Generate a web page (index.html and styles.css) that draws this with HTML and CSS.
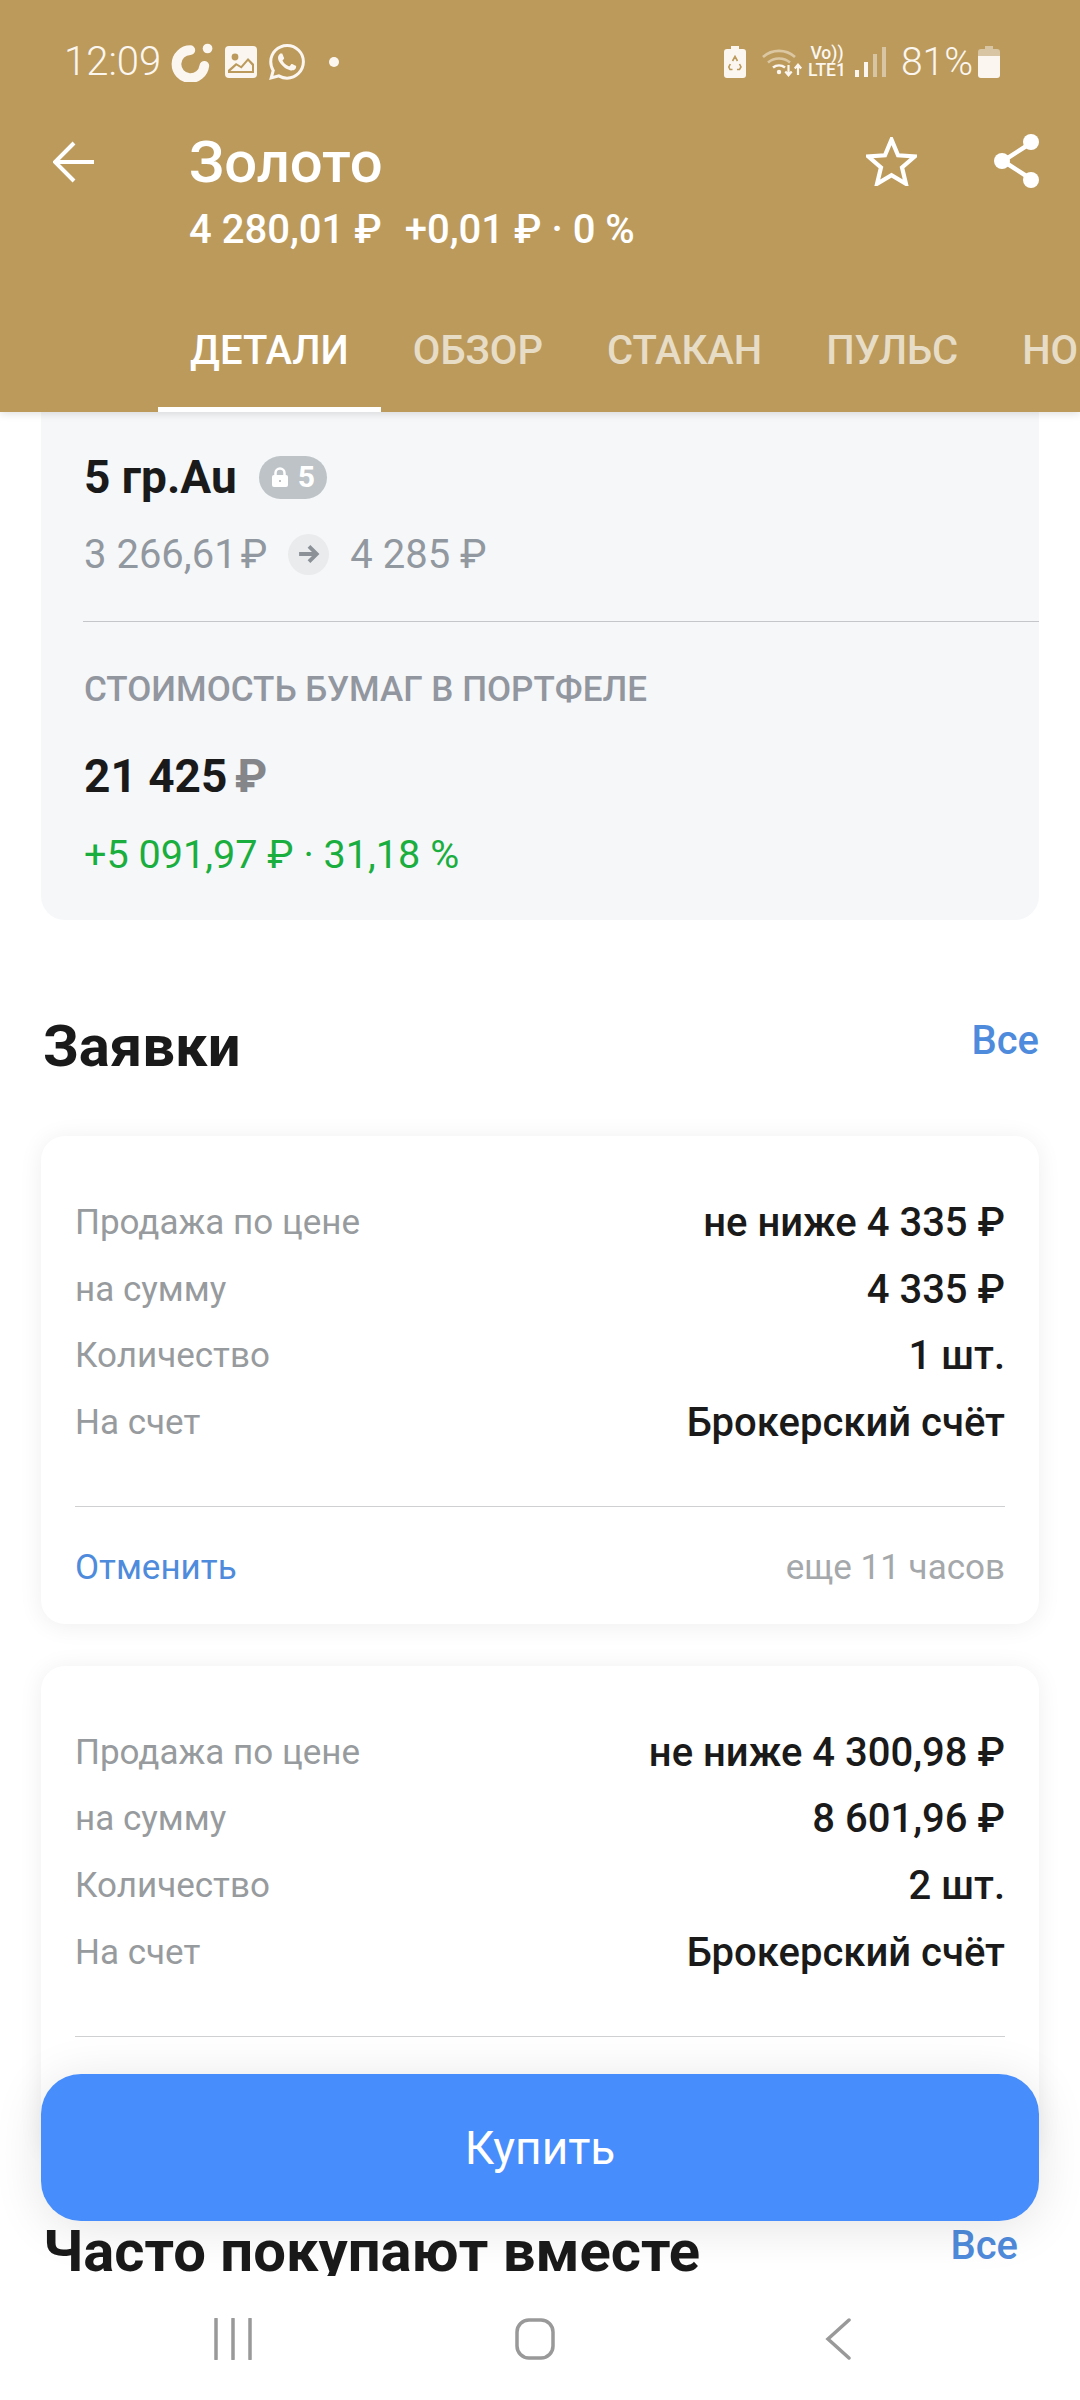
FILE: index.html
```html
<!DOCTYPE html>
<html lang="ru">
<head>
    <meta charset="UTF-8">
    <meta name="viewport" content="width=device-width, initial-scale=1.0">
    <title>Золото</title>

    <link rel="stylesheet" href="styles.css">

</head>
<body>

    <div class="phone">

        <header class="header">

            <div class="status">
                <div class="status-left">
                    <span class="clock">12:09</span>
                    <svg class="ico-ring" viewBox="0 0 40 36"><path d="M18 6.500A13 13 0 1 0 31 21" fill="none" stroke="#fbf7f0" stroke-width="9" stroke-linecap="round"/><circle cx="34" cy="5" r="4.500" fill="#fbf7f0"/></svg>
                    <svg class="ico-pic" viewBox="0 0 32 32"><rect width="32" height="32" rx="4" fill="#fbf7f0"/><circle cx="10" cy="11" r="3.400" fill="#bc9a5c"/><path d="M3 27v-3l8-7 5 3 7-8 6 6v9z" fill="#bc9a5c"/><path d="M5.500 25l6-5.500 5 3 6.500-7.500 4 4.500v5.500z" fill="#fbf7f0"/></svg>
                    <svg class="ico-wa" viewBox="0 0 24 24"><path fill="#fbf7f0" d="M17.472 14.382c-.297-.149-1.758-.867-2.03-.967-.273-.099-.471-.148-.67.15-.197.297-.767.966-.94 1.164-.173.199-.347.223-.644.075-.297-.15-1.255-.463-2.39-1.475-.883-.788-1.48-1.761-1.653-2.059-.173-.297-.018-.458.13-.606.134-.133.298-.347.446-.52.149-.174.198-.298.298-.497.099-.198.05-.371-.025-.52-.075-.149-.669-1.612-.916-2.207-.242-.579-.487-.5-.669-.51-.173-.008-.371-.01-.57-.01-.198 0-.52.074-.792.372-.272.297-1.04 1.016-1.04 2.479 0 1.462 1.065 2.875 1.213 3.074.149.198 2.096 3.2 5.077 4.487.709.306 1.262.489 1.694.625.712.227 1.36.195 1.871.118.571-.085 1.758-.719 2.006-1.413.248-.694.248-1.289.173-1.413-.074-.124-.272-.198-.57-.347m-5.421 7.403h-.004a9.87 9.87 0 01-5.031-1.378l-.361-.214-3.741.982.998-3.648-.235-.374a9.86 9.86 0 01-1.51-5.26c.001-5.45 4.436-9.884 9.888-9.884 2.64 0 5.122 1.03 6.988 2.898a9.825 9.825 0 012.893 6.994c-.003 5.45-4.437 9.884-9.885 9.884m8.413-18.297A11.815 11.815 0 0012.05 0C5.495 0 .16 5.335.157 11.892c0 2.096.547 4.142 1.588 5.945L.057 24l6.305-1.654a11.882 11.882 0 005.683 1.448h.005c6.554 0 11.89-5.335 11.893-11.893a11.821 11.821 0 00-3.48-8.413z"/></svg>
                    <span class="status-dot"></span>
                </div>
                <div class="status-right">
                    <svg class="ico-saver" viewBox="0 0 22 32"><path d="M7 0h8v3h4a3 3 0 0 1 3 3v23a3 3 0 0 1-3 3H3a3 3 0 0 1-3-3V6a3 3 0 0 1 3-3h4z" fill="#fbf7f0"/><path d="M8.500 15l2.500-4.500 2.500 4.500M15.500 18l1.500 3-1.500 2.500H13M8.500 23.500H6L4.800 21l1.500-3" fill="none" stroke="#bc9a5c" stroke-width="1.600"/></svg>
                    <svg class="ico-wifi" viewBox="0 0 42 30">
                        <path d="M2 10a24 24 0 0 1 32 0M7 15.500a17 17 0 0 1 22 0" fill="none" stroke="#dcc7a3" stroke-width="2.600"/>
                        <path d="M12 20.500a10 10 0 0 1 12 0" fill="none" stroke="#fbf7f0" stroke-width="2.600"/>
                        <circle cx="18" cy="25" r="2.200" fill="#fbf7f0"/>
                        <path d="M27.500 18v10m-3.200-3.500l3.200 3.800 3.200-3.800M37 28V18m-3.200 3.500l3.200-3.800 3.200 3.800" fill="none" stroke="#fbf7f0" stroke-width="2.200"/>
                    </svg>
                    <span class="volte"><span>Vo))</span><span>LTE1</span></span>
                    <div class="signal">
                        <span class="bar bar-1"></span>
                        <span class="bar bar-2"></span>
                        <span class="bar bar-3"></span>
                        <span class="bar bar-4"></span>
                    </div>
                    <span class="percent">81%</span>
                    <svg class="ico-battery" viewBox="0 0 22 32"><path d="M7 0h8v3h4a3 3 0 0 1 3 3v4H0V6a3 3 0 0 1 3-3h4z" fill="#d8c5a3"/><path d="M0 10h22v19a3 3 0 0 1-3 3H3a3 3 0 0 1-3-3z" fill="#fbf7f0"/></svg>
                </div>
            </div>

            <div class="toolbar">
                <svg class="ico-back" viewBox="0 0 42 42"><path d="M41 21H3M21 2L2 21l19 19" fill="none" stroke="#fff" stroke-width="4"/></svg>
                <div class="title-box">
                    <h1 class="title">Золото</h1>
                    <p class="quote"><span>4 280,01 ₽</span><span>+0,01 ₽ · 0 %</span></p>
                </div>
                <svg class="ico-star" viewBox="2 2 48 46.500"><path d="M26 4.500l6.200 14.800 15.800 1.200-12 10.400 3.700 15.500L26 38.200l-13.700 8.200L16 30.900 4 20.500l15.800-1.200z" fill="none" stroke="#fff" stroke-width="4"/></svg>
                <svg class="ico-share" viewBox="0 0 48 54"><path d="M38 9L10 27l28 18" fill="none" stroke="#fff" stroke-width="4.500"/><circle cx="38" cy="8" r="8" fill="#fff"/><circle cx="9" cy="27" r="8" fill="#fff"/><circle cx="38" cy="46" r="8" fill="#fff"/></svg>
            </div>

            <nav class="tabs">
                <a class="tab active">ДЕТАЛИ</a>
                <a class="tab">ОБЗОР</a>
                <a class="tab">СТАКАН</a>
                <a class="tab">ПУЛЬС</a>
                <a class="tab">НОВОСТИ</a>
            </nav>

        </header>

        <main class="content">

            <section class="panel">
                <div class="holding">
                    <strong>5 гр.Au</strong>
                    <span class="lock-badge">
                        <svg viewBox="0 0 18 20"><path d="M4.500 9V6a4.500 4.500 0 0 1 9 0v3" fill="none" stroke="#fff" stroke-width="2.500"/><rect x="1" y="8" width="16" height="12" rx="2" fill="#fff"/><rect x="8" y="13" width="2" height="2" fill="#bdc3c7"/></svg>
                        5
                    </span>
                </div>
                <div class="price-change">
                    <span>3 266,61&#8202;₽</span>
                    <span class="arrow-dot">
                        <svg viewBox="0 0 20 18"><path d="M1 9h16M10 2l7 7-7 7" fill="none" stroke="#8c9198" stroke-width="3.500"/></svg>
                    </span>
                    <span>4 285 ₽</span>
                </div>
                <div class="panel-line"></div>
                <div class="panel-label">СТОИМОСТЬ БУМАГ В ПОРТФЕЛЕ</div>
                <div class="panel-total">21 425 <span class="rub">₽</span></div>
                <div class="panel-gain">+5 091,97 ₽ · 31,18 %</div>
            </section>

            <div class="section-head">
                <h2>Заявки</h2>
                <a class="link-all">Все</a>
            </div>

            <section class="order">
                <div class="order-row"><span>Продажа по цене</span><b>не ниже 4 335 ₽</b></div>
                <div class="order-row"><span>на сумму</span><b>4 335 ₽</b></div>
                <div class="order-row"><span>Количество</span><b>1 шт.</b></div>
                <div class="order-row"><span>На счет</span><b>Брокерский счёт</b></div>
                <div class="order-foot">
                    <a class="cancel">Отменить</a>
                    <span class="expires">еще 11 часов</span>
                </div>
            </section>

            <section class="order">
                <div class="order-row"><span>Продажа по цене</span><b>не ниже 4 300,98 ₽</b></div>
                <div class="order-row"><span>на сумму</span><b>8 601,96 ₽</b></div>
                <div class="order-row"><span>Количество</span><b>2 шт.</b></div>
                <div class="order-row"><span>На счет</span><b>Брокерский счёт</b></div>
                <div class="order-foot">
                    <a class="cancel">Отменить</a>
                    <span class="expires">еще 11 часов</span>
                </div>
            </section>

            <div class="section-head section-head-2">
                <h2>Часто покупают вместе</h2>
                <a class="link-all">Все</a>
            </div>

            <button class="buy">Купить</button>

        </main>

        <footer class="navbar">
            <svg class="ico-recent" viewBox="0 0 40 42"><path d="M3 1v40M20 1v40M37 1v40" stroke="#999" stroke-width="3.500" stroke-linecap="round"/></svg>
            <svg class="ico-home" viewBox="0 0 40 42"><rect x="2" y="2" width="36" height="38" rx="12" fill="none" stroke="#999" stroke-width="3.500"/></svg>
            <svg class="ico-prev" viewBox="0 0 26 42"><path d="M24 2L3 21l21 19" fill="none" stroke="#999" stroke-width="3.500" stroke-linecap="round"/></svg>
        </footer>

    </div>

</body>
</html>
```

FILE: styles.css
```css
* {
    box-sizing: border-box;
}

body {
    margin: 0;
    background-color: #fff;
    font-family: Roboto, "Noto Sans", sans-serif;
    color: #1a1a1a;
}

.phone {
    width: 1080px;
    height: 2400px;
    display: flex;
    flex-direction: column;
    overflow: hidden;
}

h1, h2, p {
    margin: 0;
}

svg {
    display: block;
    flex: none;
}

/* header */

.header {
    height: 412px;
    flex: none;
    background-color: #bc9a5c;
    color: #fff;
    display: flex;
    flex-direction: column;
    position: relative;
    z-index: 2;
    box-shadow: 0 2px 8px rgba(0, 0, 0, .12);
}

.status {
    height: 46px;
    margin-top: 39px;
    padding: 0 80px 0 64px;
    display: flex;
    justify-content: space-between;
    align-items: center;
    color: #fbf7f0;
}

.status-left, .status-right {
    display: flex;
    align-items: center;
}

.clock, .percent {
    font-size: 40px;
    font-weight: 300;
    line-height: 46px;
}

.ico-ring { width: 43px; height: 39px; margin-left: 10px; }
.ico-pic { width: 32px; height: 32px; margin-left: 11px; }
.ico-wa { width: 36px; height: 36px; margin-left: 12px; }

.status-dot {
    width: 10px;
    height: 10px;
    margin-left: 24px;
    border-radius: 50%;
    background-color: #fbf7f0;
}

.ico-saver { width: 22px; height: 32px; }
.ico-wifi { width: 42px; height: 30px; margin-left: 15px; }

.volte {
    display: flex;
    flex-direction: column;
    align-items: center;
    margin-left: 5px;
    font-size: 17.500px;
    font-weight: 500;
    line-height: 17px;
}

.signal {
    display: flex;
    align-items: flex-end;
    gap: 5px;
    height: 30px;
    margin-left: 9px;
}

.bar {
    width: 4px;
    background-color: #fbf7f0;
}

.bar-1 { height: 7px; }
.bar-2 { height: 15px; }
.bar-3 { height: 23px; background-color: #d8c5a3; }
.bar-4 { height: 30px; background-color: #d8c5a3; }

.percent { margin-left: 15px; font-size: 39px; }
.ico-battery { width: 22px; height: 32px; margin-left: 5px; }

.toolbar {
    display: flex;
    align-items: flex-start;
    margin-top: 46px;
    padding: 0 39px 0 53px;
}

.ico-back { width: 42px; height: 42px; margin-top: 10px; }

.title-box {
    flex: 1;
    margin-left: 94px;
}

.title {
    font-size: 58px;
    font-weight: 500;
    line-height: 62px;
}

.quote {
    display: flex;
    gap: 23px;
    margin-top: 14px;
    font-size: 40px;
    font-weight: 500;
    line-height: 46px;
}

.ico-star { width: 51px; height: 49px; margin-top: 6px; }
.ico-share { width: 48px; height: 54px; margin: 3px 0 0 76px; }

.tabs {
    display: flex;
    margin-top: auto;
    padding-left: 158px;
    white-space: nowrap;
}

.tab {
    height: 86px;
    padding: 2px 32px 0;
    font-size: 40px;
    font-weight: 500;
    line-height: 46px;
    color: rgba(255, 255, 255, .68);
}

.tab.active {
    color: #fff;
    border-bottom: 5px solid #fff;
}

/* scrolled content */

.content {
    flex: 1;
    min-height: 0;
    position: relative;
    overflow: hidden;
}

.panel {
    margin: 0 41px;
    padding: 44px 0 45px 43px;
    background-color: #f5f7f9;
    border-radius: 0 0 24px 24px;
}

.holding {
    display: flex;
    align-items: center;
    gap: 22px;
    height: 42px;
    font-size: 46px;
    line-height: 42px;
}

.lock-badge {
    display: flex;
    align-items: center;
    gap: 9px;
    height: 43px;
    padding: 0 12px;
    border-radius: 22px;
    background-color: #bdc3c7;
    color: #fff;
    font-size: 30px;
    font-weight: 700;
}

.lock-badge svg {
    width: 18px;
    height: 20px;
}

.price-change {
    display: flex;
    align-items: center;
    gap: 21px;
    height: 40px;
    margin-top: 36px;
    font-size: 40px;
    color: #92989f;
}

.arrow-dot {
    width: 41px;
    height: 41px;
    border-radius: 50%;
    background-color: #e9ebed;
    display: flex;
    align-items: center;
    justify-content: center;
}

.arrow-dot svg {
    width: 22px;
    height: 20px;
}

.panel-line {
    height: 1px;
    margin-top: 47px;
    margin-left: -1px;
    background-color: #c4c6ca;
}

.panel-label {
    margin-top: 48px;
    font-size: 35px;
    font-weight: 500;
    line-height: 40px;
    color: #92969f;
}

.panel-total {
    margin-top: 44px;
    font-size: 46px;
    font-weight: 700;
    line-height: 44px;
}

.rub {
    margin-left: -4px;
    color: #85868a;
}

.panel-gain {
    margin-top: 37px;
    font-size: 39.600px;
    line-height: 40px;
    color: #1aae3f;
}

.section-head {
    display: flex;
    justify-content: space-between;
    align-items: flex-start;
    margin-top: 96px;
    padding: 0 41px 0 43px;
}

.section-head h2 {
    font-size: 58px;
    font-weight: 700;
    line-height: 60px;
}

.link-all {
    font-size: 40px;
    font-weight: 500;
    line-height: 50px;
    color: #4f8bdc;
}

.section-head-2 {
    margin-top: 67px;
    padding-right: 62px;
}

.order {
    margin: 42px 41px 0;
    padding: 53px 34px 36px;
    background-color: #fff;
    border-radius: 24px;
    box-shadow: 0 2px 24px rgba(0, 0, 0, .07);
}

.section-head + .order {
    margin-top: 60px;
}

.order-row {
    display: flex;
    justify-content: space-between;
    align-items: center;
    height: 66.700px;
    font-size: 35px;
    color: #979b9e;
}

.order-row b {
    font-size: 40px;
    font-weight: 500;
    color: #1a1a1a;
}

.order-foot {
    display: flex;
    justify-content: space-between;
    margin-top: 50px;
    padding-top: 41px;
    border-top: 1px solid #cfd0d2;
    font-size: 35px;
    line-height: 40px;
}

.cancel {
    color: #4f8bdc;
}

.expires {
    color: #a5a8ab;
}

.buy {
    position: absolute;
    left: 41px;
    top: 1662px;
    width: 998px;
    height: 147px;
    border: 0;
    border-radius: 40px;
    background-color: #478dfb;
    color: #fff;
    font-family: inherit;
    font-size: 46px;
    box-shadow: 0 6px 50px rgba(0, 0, 0, .11);
}

/* system nav */

.navbar {
    height: 124px;
    flex: none;
    display: flex;
    align-items: flex-start;
    background-color: #fff;
    position: relative;
    padding: 42px 0 0 213px;
}

.ico-recent { width: 40px; height: 42px; }
.ico-home { width: 40px; height: 42px; margin-left: 262px; }
.ico-prev { width: 26px; height: 42px; margin-left: 270px; }
```
